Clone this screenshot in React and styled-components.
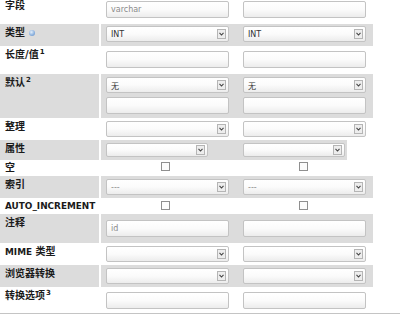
import React from "react";
import styled, { createGlobalStyle } from "styled-components";

const Global = createGlobalStyle`
  html, body {
    margin: 0;
    padding: 0;
    background: #ffffff;
  }
  body {
    font-family: "DejaVu Sans", "Noto Sans CJK SC", sans-serif;
    overflow: hidden;
  }
`;

const Sheet = styled.div`
  width: 400px;
  height: 317px;
  overflow: hidden;
`;

const Table = styled.div`
  width: 400px;
  margin-top: -4px;
  border-bottom: 1px solid #c4c4c4;
`;

const Row = styled.div`
  display: grid;
  grid-template-columns: 101px 135px ${(p) => p.$last || "137px"};
`;

const Label = styled.div`
  background: ${(p) => (p.$alt ? "#dcdcdc" : "#ffffff")};
  border-right: 2px solid #ffffff;
  padding: ${(p) => p.$pt || 3}px 0 0 5px;
  font-weight: bold;
  font-size: 10px;
  line-height: 12px;
  color: #1a1a1a;
  white-space: nowrap;
`;

const Latin = styled.span`
  font-size: 8.9px;
`;

const Sup = styled.sup`
  font-size: 7px;
  line-height: 0;
  vertical-align: 4px;
  margin-left: 1px;
`;

const Cell = styled.div`
  background: ${(p) => (p.$alt ? "#dcdcdc" : "#ffffff")};
  padding: ${(p) => p.$pt}px ${(p) => p.$pr}px ${(p) => p.$pb}px
    ${(p) => p.$pl}px;
  display: flex;
  flex-direction: column;
  align-items: ${(p) => (p.$center ? "center" : "stretch")};
  gap: 4px;
`;

const Field = styled.div`
  height: ${(p) => p.$h || 17}px;
  box-sizing: border-box;
  width: ${(p) => p.$w || 123}px;
  border: 1px solid #c3c3c3;
  border-radius: 2px;
  background: linear-gradient(to bottom, #ffffff 0%, #fbfbfb 50%, #ececec 100%);
  font-family: "DejaVu Sans", "Noto Sans CJK SC", sans-serif;
  font-size: 8px;
  color: ${(p) => (p.$muted ? "#8a8a8a" : "#333333")};
  display: flex;
  align-items: center;
  padding-left: 4px;
  position: relative;
`;

const Arrow = styled.span`
  position: absolute;
  right: 2px;
  top: 50%;
  transform: translateY(-50%);
  width: 9px;
  height: 10px;
  box-sizing: border-box;
  border: 1px solid #b5b5b5;
  background: #ededed;
  display: flex;
  align-items: center;
  justify-content: center;
`;

const Check = styled.span`
  width: 9px;
  height: 9px;
  box-sizing: border-box;
  border: 1px solid #8f8f8f;
  background: #fcfcfc;
  margin-left: ${(p) => p.$shift || 0}px;
`;

const Help = styled.span`
  display: inline-block;
  width: 6px;
  height: 6px;
  border-radius: 50%;
  background: radial-gradient(circle at 40% 35%, #e4effa 0%, #8fb4e0 55%, #5b88c4 100%);
  margin-left: 4px;
  vertical-align: 0px;
`;

const Chevron = () => (
  <svg width="5" height="4" viewBox="0 0 5 4">
    <path d="M0.5 0.8 L2.5 3 L4.5 0.8" fill="none" stroke="#444" strokeWidth="1.1" />
  </svg>
);

const Select = ({ value, muted, w, h }) => (
  <Field $muted={muted} $w={w} $h={h || 16}>
    {value}
    <Arrow>
      <Chevron />
    </Arrow>
  </Field>
);

const Input = ({ value, muted }) => <Field $muted={muted}>{value}</Field>;

const pads = (pt, pb, c) =>
  c === 1
    ? { $pt: pt, $pb: pb, $pl: 5, $pr: 7 }
    : { $pt: pt, $pb: pb, $pl: 7, $pr: 7 };

const Pair = ({ alt, pt, pb, children, center }) => (
  <>
    <Cell $alt={alt} $center={center} {...pads(pt, pb, 1)}>
      {children[0]}
    </Cell>
    <Cell $alt={alt} $center={center} {...pads(pt, pb, 2)}>
      {children[1]}
    </Cell>
  </>
);

export default function App() {
  return (
    <Sheet>
      <Global />
      <Table>
        <Row>
          <Label $pt={4}>字段</Label>
          <Pair pt={5} pb={6}>
            <Input value="varchar" muted />
            <Input />
          </Pair>
        </Row>

        <Row>
          <Label $alt>
            类型<Help />
          </Label>
          <Pair alt pt={2} pb={4}>
            <Select value="INT" />
            <Select value="INT" />
          </Pair>
        </Row>

        <Row>
          <Label>
            长度/值<Sup>1</Sup>
          </Label>
          <Pair pt={5} pb={6}>
            <Input />
            <Input />
          </Pair>
        </Row>

        <Row>
          <Label $alt>
            默认<Sup>2</Sup>
          </Label>
          <Pair alt pt={3} pb={4}>
            <>
              <Select value="无" />
              <Input />
            </>
            <>
              <Select value="无" />
              <Input />
            </>
          </Pair>
        </Row>

        <Row>
          <Label>整理</Label>
          <Pair pt={3} pb={3}>
            <Select />
            <Select />
          </Pair>
        </Row>

        <Row $last="111px">
          <Label $alt>属性</Label>
          <Pair alt pt={3} pb={3}>
            <Select w={102} h={14} />
            <Select w={102} h={14} />
          </Pair>
        </Row>

        <Row>
          <Label $pt={2}>空</Label>
          <Pair pt={2} pb={5} center>
            <Check $shift={-4} />
            <Check $shift={-2} />
          </Pair>
        </Row>

        <Row>
          <Label $alt>索引</Label>
          <Pair alt pt={3} pb={3}>
            <Select value="---" muted />
            <Select value="---" muted />
          </Pair>
        </Row>

        <Row>
          <Label $pt={2}>
            <Latin>AUTO_INCREMENT</Latin>
          </Label>
          <Pair pt={3} pb={4} center>
            <Check $shift={-4} />
            <Check $shift={-2} />
          </Pair>
        </Row>

        <Row>
          <Label $alt>注释</Label>
          <Pair alt pt={6} pb={6}>
            <Input value="id" muted />
            <Input />
          </Pair>
        </Row>

        <Row>
          <Label>
            <Latin>MIME</Latin> 类型
          </Label>
          <Pair pt={3} pb={3}>
            <Select />
            <Select />
          </Pair>
        </Row>

        <Row>
          <Label $alt>浏览器转换</Label>
          <Pair alt pt={3} pb={3}>
            <Select />
            <Select />
          </Pair>
        </Row>

        <Row>
          <Label>
            转换选项<Sup>3</Sup>
          </Label>
          <Pair pt={5} pb={4}>
            <Input />
            <Input />
          </Pair>
        </Row>
      </Table>
    </Sheet>
  );
}
